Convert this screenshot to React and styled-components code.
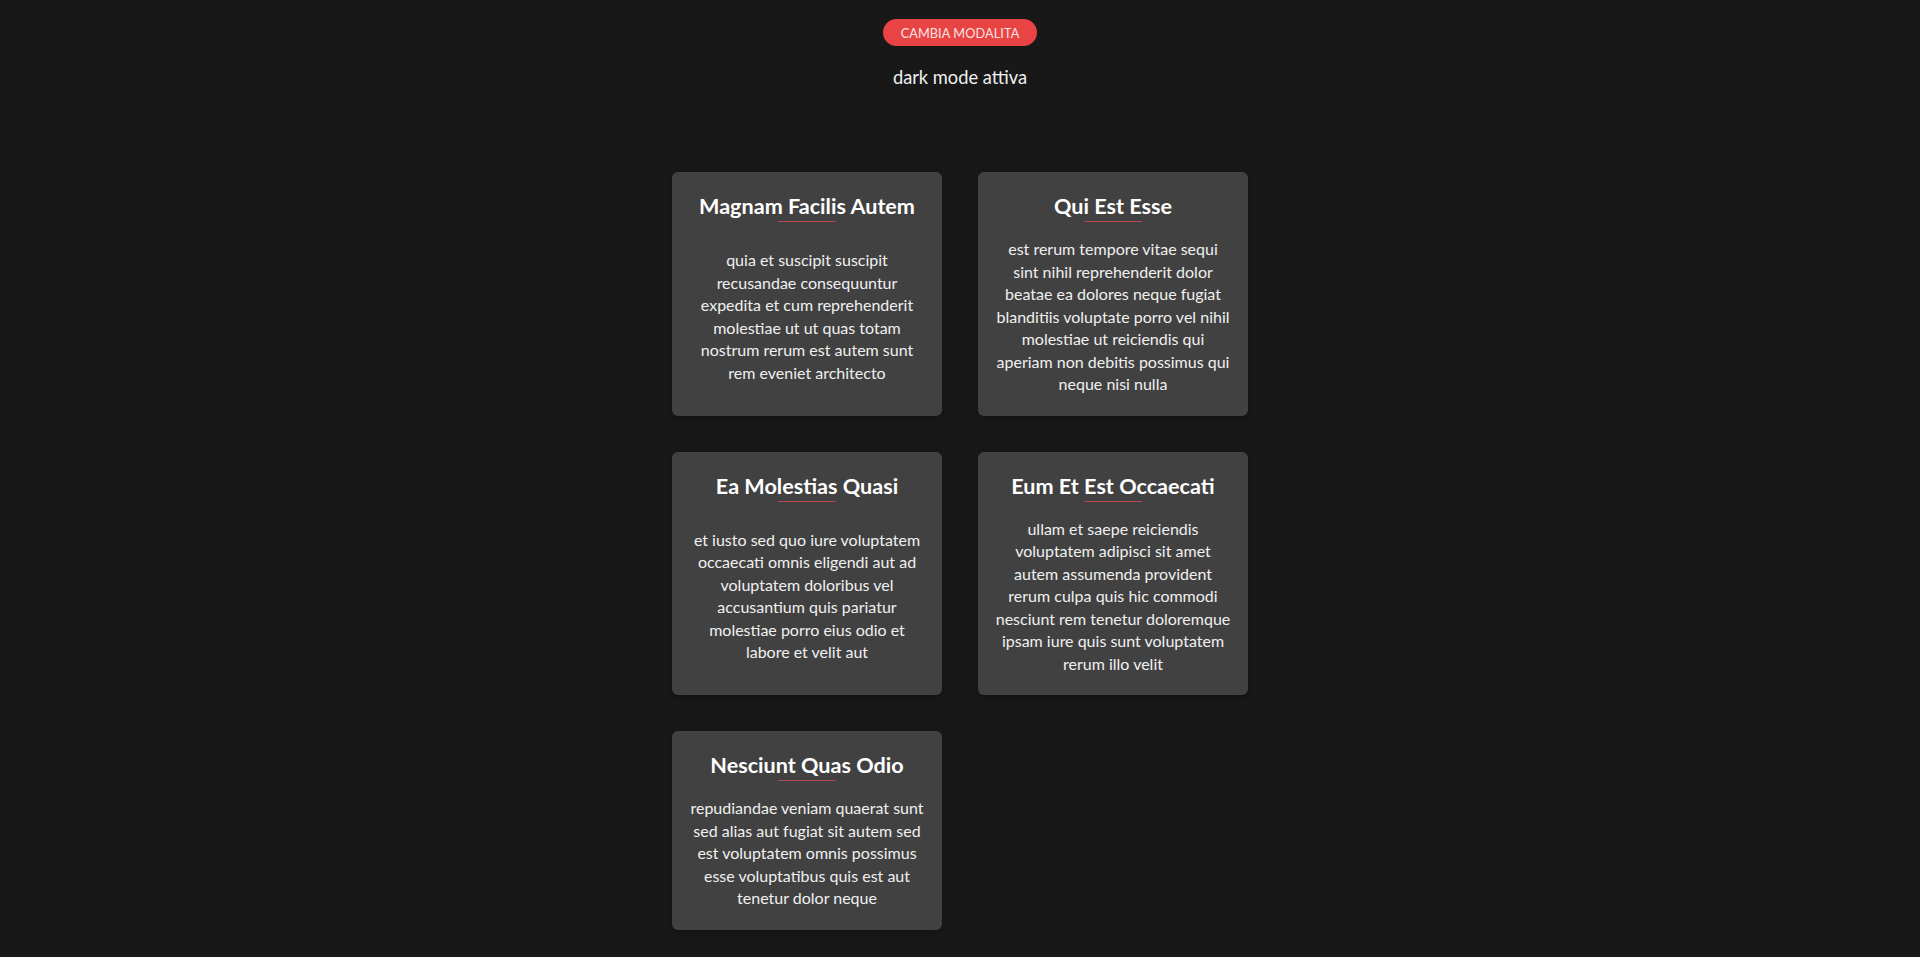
import React from 'react';
import styled, { createGlobalStyle } from 'styled-components';

const GlobalStyle = createGlobalStyle`
  * {
    box-sizing: border-box;
  }

  body {
    margin: 0;
    background: #181818;
    color: #f2f2f2;
    font-family: Lato, 'Noto Sans', sans-serif;
  }
`;

const Page = styled.main`
  min-height: 100vh;
  display: flex;
  flex-direction: column;
  align-items: center;
  padding-top: 19px;
`;

const ToggleButton = styled.button`
  height: 27px;
  width: 154px;
  border: none;
  border-radius: 999px;
  background: #e84444;
  color: #fde2e2;
  font-family: Lato, 'Noto Sans', sans-serif;
  font-size: 12.7px;
  letter-spacing: 0.1px;
  cursor: pointer;
`;

const ModeLabel = styled.p`
  margin: 20px 0 0;
  font-size: 18.3px;
  line-height: 22px;
  color: #f0f0f0;
`;

const Grid = styled.section`
  display: grid;
  grid-template-columns: repeat(2, 270px);
  gap: 36px;
  margin-top: 84px;
  padding-bottom: 26px;
`;

const Card = styled.article`
  display: flex;
  flex-direction: column;
  background: #414141;
  border-radius: 6px;
  padding: 20px 17px 20px;
  box-shadow: 0 2px 6px rgba(0, 0, 0, 0.25);
  text-align: center;
`;

const Title = styled.h2`
  position: relative;
  margin: 0 0 18px;
  font-size: 21.6px;
  line-height: 28px;
  font-weight: 700;
  color: #ffffff;

  &::after {
    content: '';
    position: absolute;
    left: 50%;
    bottom: -2px;
    width: 58px;
    height: 1px;
    transform: translateX(-50%);
    background: #b54a4a;
  }
`;

const Body = styled.div`
  flex: 1;
  display: flex;
  align-items: center;
  justify-content: center;
`;

const Text = styled.p`
  margin: 0;
  font-size: 16px;
  line-height: 22.5px;
  color: #f0f0f0;
`;

const posts = [
  {
    title: 'Magnam Facilis Autem',
    body: 'quia et suscipit suscipit recusandae consequuntur expedita et cum reprehenderit molestiae ut ut quas totam nostrum rerum est autem sunt rem eveniet architecto',
  },
  {
    title: 'Qui Est Esse',
    body: 'est rerum tempore vitae sequi sint nihil reprehenderit dolor beatae ea dolores neque fugiat blanditiis voluptate porro vel nihil molestiae ut reiciendis qui aperiam non debitis possimus qui neque nisi nulla',
  },
  {
    title: 'Ea Molestias Quasi',
    body: 'et iusto sed quo iure voluptatem occaecati omnis eligendi aut ad voluptatem doloribus vel accusantium quis pariatur molestiae porro eius odio et labore et velit aut',
  },
  {
    title: 'Eum Et Est Occaecati',
    body: 'ullam et saepe reiciendis voluptatem adipisci sit amet autem assumenda provident rerum culpa quis hic commodi nesciunt rem tenetur doloremque ipsam iure quis sunt voluptatem rerum illo velit',
  },
  {
    title: 'Nesciunt Quas Odio',
    body: 'repudiandae veniam quaerat sunt sed alias aut fugiat sit autem sed est voluptatem omnis possimus esse voluptatibus quis est aut tenetur dolor neque',
  },
];

const App = () => {
  return (
    <>
      <GlobalStyle />
      <Page>
        <ToggleButton>CAMBIA MODALITA</ToggleButton>
        <ModeLabel>dark mode attiva</ModeLabel>
        <Grid>
          {posts.map((post) => (
            <Card key={post.title}>
              <Title>{post.title}</Title>
              <Body>
                <Text>{post.body}</Text>
              </Body>
            </Card>
          ))}
        </Grid>
      </Page>
    </>
  );
};

export default App;
